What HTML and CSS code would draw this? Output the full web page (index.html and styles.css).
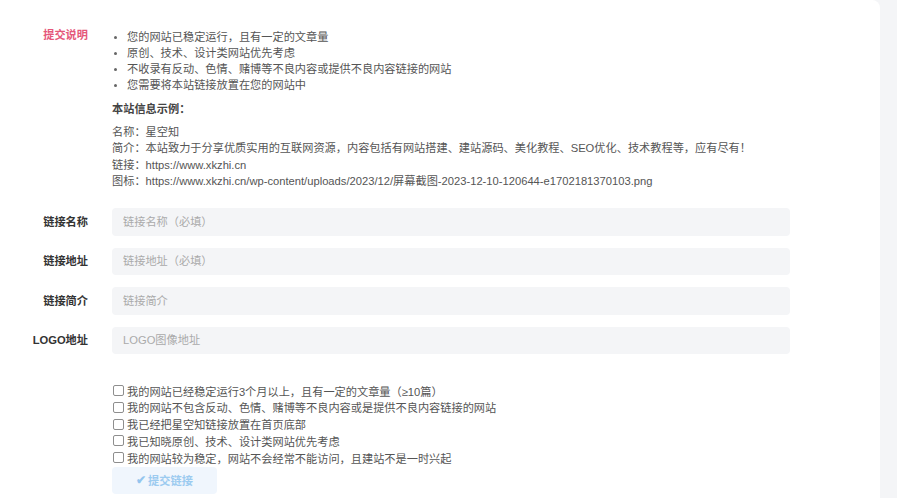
FILE: index.html
```html
<!DOCTYPE html>
<html lang="zh-CN">
<head>
<meta charset="utf-8">
<title>提交链接</title>
<link rel="stylesheet" href="styles.css">
</head>
<body>
<div class="page">
  <main class="card">
    <div class="row row-intro">
      <div class="label label-pink">提交说明</div>
      <div class="content">
        <ul class="rules">
          <li>您的网站已稳定运行，且有一定的文章量</li>
          <li>原创、技术、设计类网站优先考虑</li>
          <li>不收录有反动、色情、赌博等不良内容或提供不良内容链接的网站</li>
          <li>您需要将本站链接放置在您的网站中</li>
        </ul>
        <p class="info-title">本站信息示例：</p>
        <div class="info">
          <p>名称：星空知</p>
          <p>简介：本站致力于分享优质实用的互联网资源，内容包括有网站搭建、建站源码、美化教程、SEO优化、技术教程等，应有尽有！</p>
          <p>链接：https://www.xkzhi.cn</p>
          <p>图标：https://www.xkzhi.cn/wp-content/uploads/2023/12/屏幕截图-2023-12-10-120644-e1702181370103.png</p>
        </div>
      </div>
    </div>

    <div class="fields">
      <div class="row row-field">
        <label class="label" for="f1">链接名称</label>
        <input class="input" id="f1" type="text" placeholder="链接名称（必填）">
      </div>
      <div class="row row-field">
        <label class="label" for="f2">链接地址</label>
        <input class="input" id="f2" type="text" placeholder="链接地址（必填）">
      </div>
      <div class="row row-field">
        <label class="label" for="f3">链接简介</label>
        <input class="input" id="f3" type="text" placeholder="链接简介">
      </div>
      <div class="row row-field">
        <label class="label" for="f4">LOGO地址</label>
        <input class="input" id="f4" type="text" placeholder="LOGO图像地址">
      </div>
    </div>

    <div class="row row-checks">
      <div class="label"></div>
      <div class="content">
        <label class="check"><input type="checkbox"><span>我的网站已经稳定运行3个月以上，且有一定的文章量（≥10篇）</span></label>
        <label class="check"><input type="checkbox"><span>我的网站不包含反动、色情、赌博等不良内容或是提供不良内容链接的网站</span></label>
        <label class="check"><input type="checkbox"><span>我已经把星空知链接放置在首页底部</span></label>
        <label class="check"><input type="checkbox"><span>我已知晓原创、技术、设计类网站优先考虑</span></label>
        <label class="check"><input type="checkbox"><span>我的网站较为稳定，网站不会经常不能访问，且建站不是一时兴起</span></label>
        <button class="submit" type="button"><span class="tick">✔</span>提交链接</button>
      </div>
    </div>
  </main>
</div>
</body>
</html>
```

FILE: styles.css
```css
* {
  box-sizing: border-box;
}

html, body {
  margin: 0;
  padding: 0;
}

body {
  background: #f4f5f7;
  font-family: "Liberation Sans", "Noto Sans CJK SC", sans-serif;
  font-size: 11.2px;
  color: #555;
}

.page {
  width: 897px;
  height: 498px;
  overflow: hidden;
}

.card {
  width: 880px;
  min-height: 498px;
  background: #fff;
  border-top-right-radius: 8px;
  padding-top: 29px;
}

.row {
  display: grid;
  grid-template-columns: 88px 678px;
  column-gap: 24px;
}

.label {
  text-align: right;
  font-weight: bold;
  color: #333;
  line-height: 16px;
}

.label-pink {
  color: #e5577a;
  font-weight: bold;
  margin-top: -2px;
}

.content p {
  margin: 0;
}

.rules {
  list-style: none;
  margin: 0;
  padding: 0;
}

.rules li {
  position: relative;
  padding-left: 15px;
  line-height: 16px;
}

.rules li::before {
  content: "";
  position: absolute;
  left: 2px;
  top: 7px;
  width: 3px;
  height: 3px;
  border-radius: 50%;
  background: #666;
}

.info-title {
  margin-top: 8px !important;
  font-weight: bold;
  color: #444;
  line-height: 16px;
}

.info {
  margin-top: 7px;
}

.info p {
  line-height: 16.3px;
  white-space: nowrap;
}

.fields {
  margin-top: 19px;
  display: flex;
  flex-direction: column;
  gap: 12px;
}

.row-field {
  align-items: center;
}

.input {
  height: 27.5px;
  width: 678px;
  border: none;
  outline: none;
  background: #f4f5f7;
  border-radius: 4px;
  padding: 0 11px;
  font-family: inherit;
  font-size: 11.2px;
  color: #555;
}

.input::placeholder {
  color: #aaa;
}

.row-checks {
  margin-top: 28px;
}

.check {
  display: flex;
  align-items: center;
  height: 16.75px;
  color: #555;
  white-space: nowrap;
}

.check input {
  appearance: none;
  -webkit-appearance: none;
  width: 11px;
  height: 11px;
  margin: 0 3px 0 1px;
  border: 1px solid #8e8e8e;
  border-radius: 2px;
  background: #fff;
  flex: none;
}

.submit {
  margin-top: 1px;
  width: 105px;
  height: 27px;
  border: none;
  border-radius: 4px;
  background: #f0f6fd;
  color: #9ccbf0;
  font-family: inherit;
  font-size: 11.2px;
  font-weight: bold;
  display: flex;
  align-items: center;
  justify-content: center;
  gap: 2px;
  padding: 0;
}

.tick {
  font-size: 11.5px;
  color: #93c5ee;
}
```
